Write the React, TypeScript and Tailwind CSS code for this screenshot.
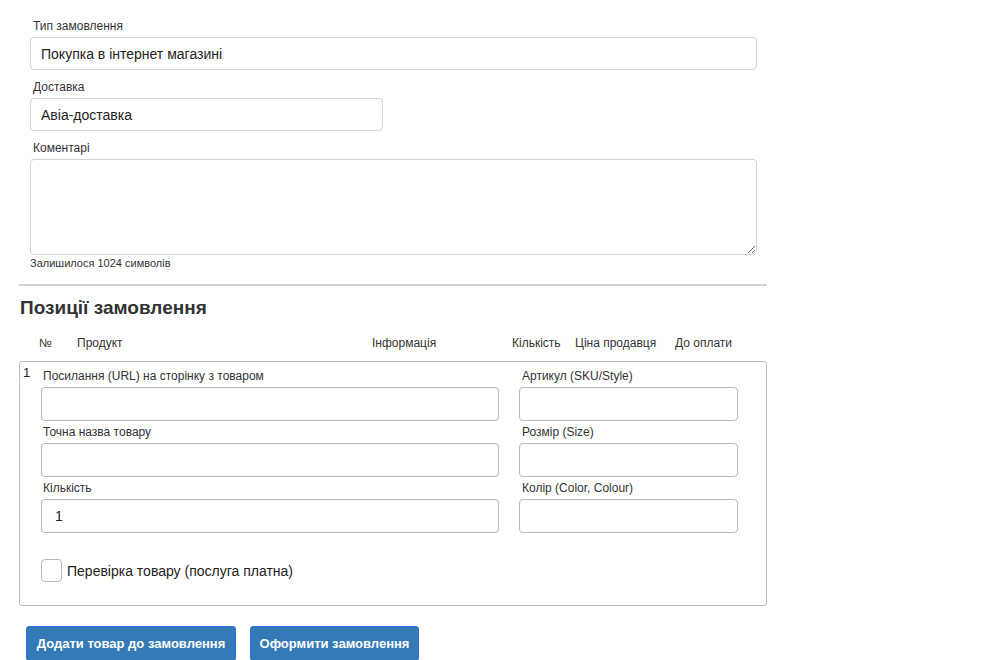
import React from 'react';

const field =
  'block h-[33px] rounded-[4px] border border-[#cfd4da] bg-white px-[10px] text-[14px] text-[#222] outline-none';
const itemField =
  'block h-[34px] rounded-[4px] border border-[#b9b9b9] bg-white px-[13px] text-[14px] text-[#222] outline-none';

function Label({ children, className = '' }: { children: React.ReactNode; className?: string }) {
  return <div className={`h-[17px] text-[12px] leading-[17px] text-[#333] ${className}`}>{children}</div>;
}

export default function App() {
  return (
    <div className="min-h-[660px] bg-white pt-[18px] text-[#333]" style={{ fontFamily: '"Liberation Sans", Arial, sans-serif' }}>
      <div className="ml-[19px] w-[748px]">
        {/* order details */}
        <div className="pl-[11px]">
          <Label className="ml-[3px]">Тип замовлення</Label>
          <input className={`${field} mt-[2px] w-[727px]`} defaultValue="Покупка в інтернет магазині" />

          <Label className="ml-[3px] mt-[9px]">Доставка</Label>
          <input className={`${field} mt-[2px] w-[353px]`} defaultValue="Авіа-доставка" />

          <Label className="ml-[3px] mt-[9px]">Коментарі</Label>
          <textarea className="mt-[2px] block h-[96px] w-[727px] rounded-[4px] border border-[#cfd4da] bg-white outline-none" />
          <div className="mt-px h-[14px] text-[11px] leading-[14px] text-[#333]">Залишилося 1024 символів</div>
        </div>

        <div className="mt-[14px] h-[2px] bg-[#d2d2d2]" />

        <h2 className="mt-[10px] ml-px h-[24px] text-[19px] font-bold leading-[24px] text-[#333]">Позиції замовлення</h2>

        {/* table header */}
        <div className="mt-[15px] flex h-[17px] text-[12px] leading-[17px] text-[#333]">
          <span className="ml-[20px] w-[38px]">№</span>
          <span className="w-[295px]">Продукт</span>
          <span className="w-[140px]">Інформація</span>
          <span className="w-[63px]">Кількість</span>
          <span className="w-[100px]">Ціна продавця</span>
          <span>До оплати</span>
        </div>

        {/* item row */}
        <div className="mt-[9px] flex h-[245px] rounded-[3px] border border-[#bdbdbd]">
          <div className="w-[21px] pl-[3px] pt-[2px] text-[13px] leading-[17px] text-[#222]">1</div>
          <div className="flex-1 pt-[6px]">
            <div className="flex gap-[20px]">
              <div className="w-[458px]">
                <Label className="ml-[2px]">Посилання (URL) на сторінку з товаром</Label>
                <input className={`${itemField} mt-[2px] w-[458px]`} />
                <Label className="ml-[2px] mt-[3px]">Точна назва товару</Label>
                <input className={`${itemField} mt-[2px] w-[458px]`} />
                <Label className="ml-[2px] mt-[3px]">Кількість</Label>
                <input className={`${itemField} mt-[2px] w-[458px]`} defaultValue="1" />
              </div>
              <div className="w-[219px]">
                <Label className="ml-[3px]">Артикул (SKU/Style)</Label>
                <input className={`${itemField} mt-[2px] w-[219px]`} />
                <Label className="ml-[3px] mt-[3px]">Розмір (Size)</Label>
                <input className={`${itemField} mt-[2px] w-[219px]`} />
                <Label className="ml-[3px] mt-[3px]">Колір (Color, Colour)</Label>
                <input className={`${itemField} mt-[2px] w-[219px]`} />
              </div>
            </div>
            <label className="mt-[26px] flex items-center gap-[5px]">
              <span className="block h-[23px] w-[21px] rounded-[4px] border border-[#b9b9b9] bg-white" />
              <span className="text-[14px] leading-[18px] text-[#222]">Перевірка товару (послуга платна)</span>
            </label>
          </div>
        </div>

        {/* actions */}
        <div className="mt-[20px] flex gap-[14px] pl-[7px]">
          <button className="h-[35px] w-[210px] rounded-[3px] border border-[#2d6fe0] bg-[#337ab7] text-[13px] font-bold text-white">
            Додати товар до замовлення
          </button>
          <button className="h-[35px] w-[169px] rounded-[3px] border border-[#2d6fe0] bg-[#337ab7] text-[13px] font-bold text-white">
            Оформити замовлення
          </button>
        </div>
      </div>
    </div>
  );
}
